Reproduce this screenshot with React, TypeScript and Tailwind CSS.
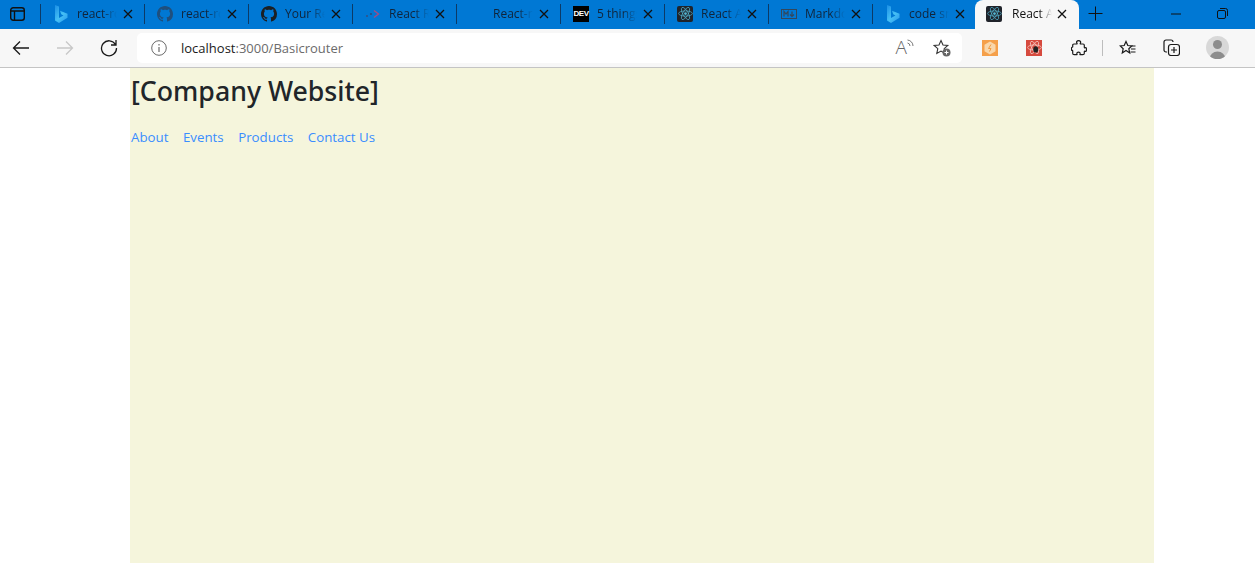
import type { ReactNode } from "react"

const BingIcon = ({ id }: { id: string }) => (
  <svg width="14" height="20" viewBox="0 0 14 20">
    <defs>
      <linearGradient id={id} x1="0" y1="0" x2="0.800" y2="1">
        <stop offset="0" stopColor="#1c8fe6" />
        <stop offset="0.600" stopColor="#45c0f5" />
        <stop offset="1" stopColor="#2f9fee" />
      </linearGradient>
    </defs>
    <path d="M1 1l4 1.500v11.500l4.500-2.600-2.300-1.100L6 6.800l7.500 2.900v4L5 19l-4-2.600z" fill={`url(#${id})`} />
  </svg>
)

const GithubIcon = ({ color }: { color: string }) => (
  <svg width="16" height="16" viewBox="0 0 16 16" fill={color}>
    <path d="M8 0C3.580 0 0 3.580 0 8c0 3.540 2.290 6.530 5.470 7.590.4.070.55-.17.55-.38 0-.19-.01-.82-.01-1.490-2.010.37-2.530-.49-2.690-.94-.09-.23-.48-.94-.82-1.130-.28-.15-.68-.52-.01-.53.63-.01 1.080.58 1.230.82.72 1.210 1.870.87 2.330.66.07-.52.28-.87.51-1.070-1.780-.2-3.640-.89-3.640-3.950 0-.87.31-1.590.82-2.150-.08-.2-.36-1.020.08-2.120 0 0 .67-.21 2.200.82.64-.18 1.320-.27 2-.27s1.360.09 2 .27c1.530-1.040 2.200-.82 2.200-.82.44 1.100.16 1.920.08 2.120.51.56.82 1.270.82 2.150 0 3.070-1.870 3.750-3.650 3.950.29.250.54.730.54 1.480 0 1.070-.01 1.930-.01 2.200 0 .21.15.46.55.38A8.010 8.010 0 0 0 16 8c0-4.420-3.580-8-8-8z" />
  </svg>
)

const RouterIcon = () => (
  <svg width="16" height="16" viewBox="0 0 16 16">
    <circle cx="2" cy="10" r="0.900" fill="#3b4a78" />
    <circle cx="6" cy="8" r="1.100" fill="#2f4a78" />
    <path d="M9 4.500l4.500 3.500L9 11.500" fill="none" stroke="#a84a80" strokeWidth="1.300" />
  </svg>
)

const DevIcon = () => (
  <div className="flex h-4 w-4 items-center justify-center bg-black text-[8px] font-bold leading-none tracking-[-0.5px] text-white [font-family:'Liberation_Sans',sans-serif]">
    DEV
  </div>
)

const ReactIcon = () => (
  <div className="flex h-4 w-4 items-center justify-center rounded-[2px] bg-[#20232a]">
    <svg width="15" height="15" viewBox="-12 -12 24 24" fill="none" stroke="#61dafb" strokeWidth="1.100" opacity="0.800">
      <circle r="2.200" fill="#61dafb" stroke="none" />
      <ellipse rx="11" ry="4.200" />
      <ellipse rx="11" ry="4.200" transform="rotate(60)" />
      <ellipse rx="11" ry="4.200" transform="rotate(120)" />
    </svg>
  </div>
)

const MarkdownIcon = () => (
  <svg width="16" height="10" viewBox="0 0 16 10" fill="none" stroke="#33475b">
    <rect x="0.500" y="0.500" width="15" height="9" />
    <path d="M3 7.500v-5l2 2.500 2-2.500v5M11 2.500v4.500M9 5.500l2 2 2-2" strokeWidth="1.200" />
  </svg>
)

const CloseIcon = () => (
  <svg width="10" height="10" viewBox="0 0 10 10" stroke="#111" strokeWidth="1.300" className="shrink-0">
    <path d="M1 1l8 8M9 1l-8 8" />
  </svg>
)

const tabs: { title: string; icon: ReactNode }[] = [
  { title: "react-router", icon: <BingIcon id="bing-a" /> },
  { title: "react-router", icon: <GithubIcon color="#1f4f7d" /> },
  { title: "Your Repos", icon: <GithubIcon color="#1b1f23" /> },
  { title: "React Router", icon: <RouterIcon /> },
  { title: "React-router", icon: <span /> },
  { title: "5 things", icon: <DevIcon /> },
  { title: "React App", icon: <ReactIcon /> },
  { title: "Markdown", icon: <MarkdownIcon /> },
  { title: "code snippet", icon: <BingIcon id="bing-b" /> },
]

function Tab({ title, icon }: { title: string; icon: ReactNode }) {
  return (
    <div className="flex h-[27px] w-[104px] shrink-0 items-center pl-[8px] pr-[3px]">
      <div className="h-[20px] w-px shrink-0 bg-[#0c3a66]" />
      <div className="ml-[12px] flex w-[16px] shrink-0 items-center justify-center">{icon}</div>
      <span className="ml-[8px] w-[42px] overflow-hidden whitespace-nowrap text-[12px] text-[#10243a] [mask-image:linear-gradient(to_right,black_60%,transparent_95%)]">
        {title}
      </span>
      <span className="ml-auto">
        <CloseIcon />
      </span>
    </div>
  )
}

function TabBar() {
  return (
    <div className="flex h-[29px] items-center bg-[#0078d4] pb-[2px]">
      <div className="flex w-[32px] shrink-0 pl-[10px]">
        <svg width="15" height="14" viewBox="0 0 15 14" fill="none" stroke="#111" strokeWidth="1.400">
          <rect x="0.700" y="0.700" width="13.600" height="12.600" rx="2.500" />
          <path d="M0.700 4h13.600M4.500 4v9.300" />
        </svg>
      </div>
      {tabs.map((tab, i) => (
        <Tab key={i} title={tab.title} icon={tab.icon} />
      ))}
      <div className="ml-[7px] flex h-[29px] w-[104px] shrink-0 items-center self-start rounded-t-[8px] bg-[#f7f7f7] pb-[2px] pl-[11px] pr-[12px]">
        <ReactIcon />
        <span className="ml-[10px] w-[42px] overflow-hidden whitespace-nowrap text-[12px] text-[#111] [mask-image:linear-gradient(to_right,black_65%,transparent_95%)]">
          React App
        </span>
        <span className="ml-auto">
          <CloseIcon />
        </span>
      </div>
      <svg width="15" height="15" viewBox="0 0 15 15" stroke="#111" className="ml-[9px] shrink-0">
        <path d="M7.500 0.500v14M0.500 7.500h14" />
      </svg>
      <svg width="10" height="2" viewBox="0 0 10 2" stroke="#111" className="ml-[68px] shrink-0">
        <path d="M0 1h10" />
      </svg>
      <svg width="11" height="11" viewBox="0 0 11 11" fill="none" stroke="#111" className="ml-[36px] shrink-0">
        <rect x="0.500" y="2.500" width="8" height="8" rx="1.500" />
        <path d="M3 0.500h5.500a2 2 0 0 1 2 2V8" />
      </svg>
    </div>
  )
}

function ToolBar() {
  return (
    <div className="flex h-[39px] items-center border-b border-[#c4c4c4] bg-[#f7f7f7] pb-[1px]">
      <svg width="18" height="16" viewBox="0 0 18 16" fill="none" stroke="#1a1a1a" strokeWidth="1.300" className="ml-[12px] shrink-0">
        <path d="M17 8H1.500M8 1.500L1.500 8 8 14.500" />
      </svg>
      <svg width="18" height="16" viewBox="0 0 18 16" fill="none" stroke="#c8c8c8" strokeWidth="1.300" className="ml-[26px] shrink-0">
        <path d="M1 8h15.500M10 1.500L16.500 8 10 14.500" />
      </svg>
      <svg width="18" height="18" viewBox="0 0 18 18" fill="none" stroke="#1a1a1a" strokeWidth="1.300" className="ml-[26px] shrink-0">
        <path d="M15.500 5.500A7.500 7.500 0 1 0 16.500 9M16 1v5h-5" />
      </svg>
      <div className="ml-[19px] flex h-[30px] w-[825px] shrink-0 items-center rounded-[5px] bg-white pl-[14px] pr-[11px]">
        <svg width="16" height="16" viewBox="0 0 16 16" fill="none" stroke="#6a6a6a" className="shrink-0">
          <circle cx="8" cy="8" r="7.300" />
          <path d="M8 7v5M8 4v1.500" strokeWidth="1.200" />
        </svg>
        <span className="ml-[14px] pt-[2px] text-[13px] text-[#1a1a1a]">
          localhost<span className="text-[#6b6b6b]">:3000/Basicrouter</span>
        </span>
        <span className="ml-auto text-[19px] font-light leading-none text-[#666]">A</span>
        <svg width="7" height="11" viewBox="0 0 7 11" fill="none" stroke="#777" className="mb-[7px] shrink-0">
          <path d="M0.500 1a6 6 0 0 1 5.500 6M0.500 4a3 3 0 0 1 2.500 3" />
        </svg>
        <svg width="18" height="18" viewBox="0 0 18 18" className="ml-[19px] shrink-0">
          <path d="M8 1.500l2 4.500 4.800.5-3.600 3.200 1 4.800L8 12.100 3.800 14.500l1-4.800L1.200 6.500 6 6z" fill="none" stroke="#333" strokeWidth="1.100" />
          <circle cx="13.500" cy="13.500" r="4" fill="#666" />
          <path d="M13.500 11.500v4M11.500 13.500h4" stroke="#fff" />
        </svg>
      </div>
      <div className="ml-[20px] flex h-[16px] w-[16px] shrink-0 items-center justify-center bg-[#f5a04a]">
        <svg width="12" height="14" viewBox="0 0 12 14">
          <path d="M6 0.500l5.500 3.200v6.600L6 13.500 .5 10.300V3.700z" fill="#f9d7ab" />
          <path d="M7 3.500L4.500 7.500h2.500l-1.500 3" fill="none" stroke="#f29a3e" />
        </svg>
      </div>
      <div className="ml-[28px] flex h-[16px] w-[16px] shrink-0 items-center justify-center bg-[#d64a3e]">
        <svg width="15" height="15" viewBox="-12 -12 24 24" fill="none" stroke="#f4c4be" strokeWidth="1.300">
          <ellipse rx="11" ry="4.200" />
          <ellipse rx="11" ry="4.200" transform="rotate(60)" />
          <ellipse rx="11" ry="4.200" transform="rotate(120)" />
          <ellipse cx="2" cy="3" rx="4" ry="5" fill="#222" stroke="none" />
        </svg>
      </div>
      <svg width="16" height="16" viewBox="0 0 16 16" fill="none" stroke="#1a1a1a" strokeWidth="1.200" className="ml-[29px] shrink-0">
        <path d="M6 3.200C5 1.800 6 .7 7.600 .7s2.600 1.100 1.700 2.500c-.3.500 0 .8.500.8h2.300c.8 0 1.200.4 1.200 1.200v2c0 .5.300.8.800.5 1-.6 1.400.6 1.400 1.800s-.5 2.400-1.500 1.800c-.5-.3-.7 0-.7.500v1.400c0 1-.5 1.500-1.500 1.500H9.500c-.6 0-.8-.4-.5-.9.500-1-.4-1.600-1.500-1.600s-2 .6-1.500 1.600c.3.500 0 .9-.5.900H3.200c-1 0-1.500-.5-1.500-1.500v-2.300c0-.5-.4-.7-.8-.5C.3 10.600.3 7.500.9 7.300c.4-.2.800 0 .8-.500V5.200C1.700 4.400 2.100 4 2.900 4h2.600c.5 0 .8-.3.500-.8z" />
      </svg>
      <div className="ml-[15px] h-[16px] w-px shrink-0 bg-[#bdbdbd]" />
      <svg width="18" height="16" viewBox="0 0 18 16" fill="none" stroke="#1a1a1a" strokeWidth="1.200" className="ml-[16px] shrink-0">
        <path d="M7 1.500l1.800 4 4 .4-3 2.800.9 4.300L7 10.500l-3.700 2.500.9-4.300-3-2.800 4-.4z" />
        <path d="M12.500 6h4M12 9h4.500M11.500 12h5" />
      </svg>
      <svg width="17" height="17" viewBox="0 0 17 17" fill="none" stroke="#1a1a1a" strokeWidth="1.200" className="ml-[26px] shrink-0">
        <path d="M4 13H3a2 2 0 0 1-2-2V3a2 2 0 0 1 2-2h5a2 2 0 0 1 2 2" />
        <rect x="5.500" y="5.500" width="11" height="11" rx="2.500" />
        <path d="M11 8v6M8 11h6" />
      </svg>
      <div className="ml-[26px] flex h-[23px] w-[23px] shrink-0 items-end justify-center overflow-hidden rounded-full bg-[#d8d8d8]">
        <svg width="23" height="23" viewBox="0 0 23 23" fill="#8c8c8c">
          <circle cx="11.500" cy="8.500" r="4.500" />
          <path d="M3.500 23a8 7.500 0 0 1 16 0z" />
        </svg>
      </div>
    </div>
  )
}

export default function App() {
  return (
    <div className="h-[563px] w-[1255px] overflow-hidden bg-white [font-family:'Open_Sans','Noto_Sans',sans-serif]">
      <TabBar />
      <ToolBar />
      <main className="ml-[130px] h-[495px] w-[1024px] bg-[#f5f5dc]">
        <h1 className="pl-px pt-[3px] text-[26.700px] font-medium leading-[40px] text-[#212529] [font-family:'Noto_Sans',sans-serif]">
          [Company Website]
        </h1>
        <nav className="mt-[14px] flex gap-[14.500px] text-[13.300px] leading-[24px] text-[#3a8dff]">
          <a className="pl-px">About</a>
          <a>Events</a>
          <a>Products</a>
          <a>Contact Us</a>
        </nav>
      </main>
    </div>
  )
}
